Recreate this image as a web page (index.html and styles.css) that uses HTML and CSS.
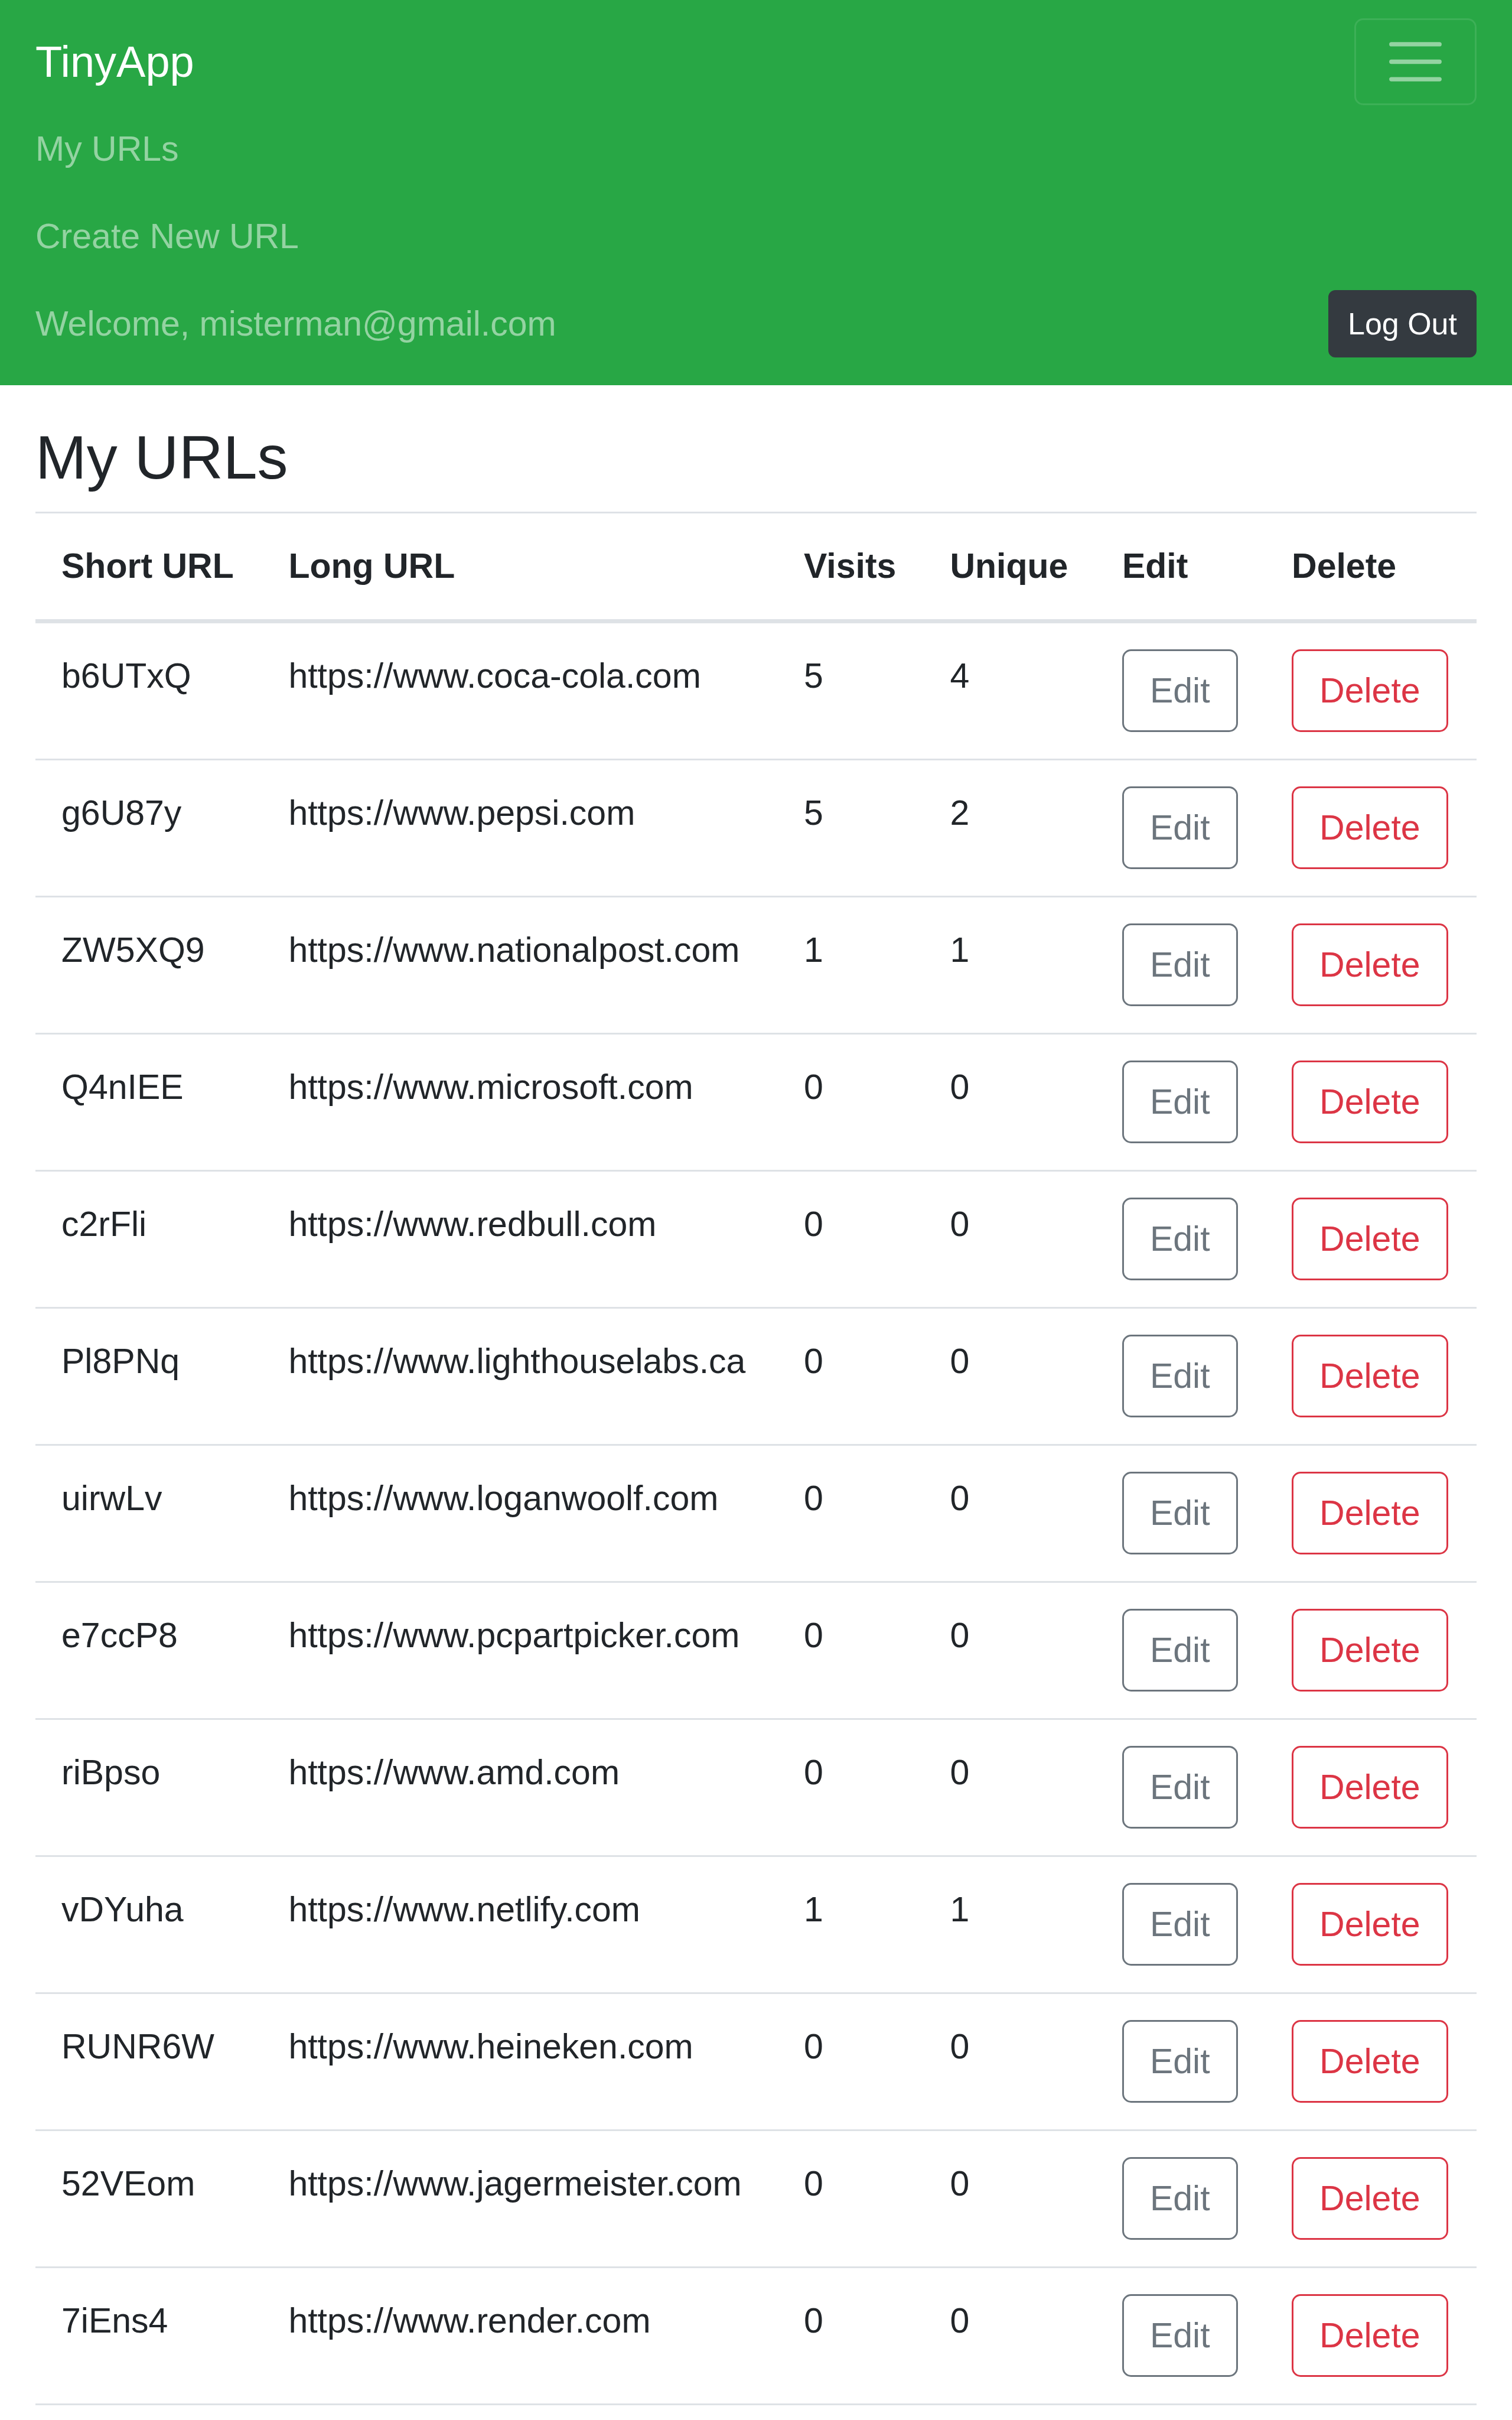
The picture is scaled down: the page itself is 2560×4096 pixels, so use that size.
FILE: index.html
```html
<!DOCTYPE html>
<html lang="en">
<head>
  <meta charset="utf-8">
  <meta name="viewport" content="width=device-width, initial-scale=1">
  <title>TinyApp</title>
  <link rel="stylesheet" href="styles.css">
</head>
<body>
  <header class="navbar">
    <div class="navbar-top">
      <a class="navbar-brand" href="#">TinyApp</a>
      <button class="navbar-toggler" type="button" aria-label="Toggle navigation">
        <svg class="navbar-toggler-icon" viewBox="0 0 30 30" aria-hidden="true">
          <path d="M4 7h22M4 15h22M4 23h22" fill="none" stroke="rgba(255,255,255,.5)" stroke-width="2" stroke-linecap="round" stroke-miterlimit="10"/>
        </svg>
      </button>
    </div>
    <nav class="navbar-nav">
      <a class="nav-link" href="#">My URLs</a>
      <a class="nav-link" href="#">Create New URL</a>
    </nav>
    <form class="navbar-user">
      <span class="nav-link">Welcome, misterman@gmail.com</span>
      <button class="btn btn-dark" type="button">Log Out</button>
    </form>
  </header>

  <main class="container">
    <h1 class="title">My URLs</h1>
    <table class="table">
      <thead>
        <tr><th scope="col">Short URL</th><th scope="col">Long URL</th><th scope="col">Visits</th><th scope="col">Unique</th><th scope="col">Edit</th><th scope="col">Delete</th></tr>
      </thead>
      <tbody>
        <tr><td>b6UTxQ</td><td>https://www.coca-cola.com</td><td>5</td><td>4</td><td><button class="btn btn-edit" type="button">Edit</button></td><td><button class="btn btn-delete" type="button">Delete</button></td></tr>
        <tr><td>g6U87y</td><td>https://www.pepsi.com</td><td>5</td><td>2</td><td><button class="btn btn-edit" type="button">Edit</button></td><td><button class="btn btn-delete" type="button">Delete</button></td></tr>
        <tr><td>ZW5XQ9</td><td>https://www.nationalpost.com</td><td>1</td><td>1</td><td><button class="btn btn-edit" type="button">Edit</button></td><td><button class="btn btn-delete" type="button">Delete</button></td></tr>
        <tr><td>Q4nIEE</td><td>https://www.microsoft.com</td><td>0</td><td>0</td><td><button class="btn btn-edit" type="button">Edit</button></td><td><button class="btn btn-delete" type="button">Delete</button></td></tr>
        <tr><td>c2rFli</td><td>https://www.redbull.com</td><td>0</td><td>0</td><td><button class="btn btn-edit" type="button">Edit</button></td><td><button class="btn btn-delete" type="button">Delete</button></td></tr>
        <tr><td>Pl8PNq</td><td>https://www.lighthouselabs.ca</td><td>0</td><td>0</td><td><button class="btn btn-edit" type="button">Edit</button></td><td><button class="btn btn-delete" type="button">Delete</button></td></tr>
        <tr><td>uirwLv</td><td>https://www.loganwoolf.com</td><td>0</td><td>0</td><td><button class="btn btn-edit" type="button">Edit</button></td><td><button class="btn btn-delete" type="button">Delete</button></td></tr>
        <tr><td>e7ccP8</td><td>https://www.pcpartpicker.com</td><td>0</td><td>0</td><td><button class="btn btn-edit" type="button">Edit</button></td><td><button class="btn btn-delete" type="button">Delete</button></td></tr>
        <tr><td>riBpso</td><td>https://www.amd.com</td><td>0</td><td>0</td><td><button class="btn btn-edit" type="button">Edit</button></td><td><button class="btn btn-delete" type="button">Delete</button></td></tr>
        <tr><td>vDYuha</td><td>https://www.netlify.com</td><td>1</td><td>1</td><td><button class="btn btn-edit" type="button">Edit</button></td><td><button class="btn btn-delete" type="button">Delete</button></td></tr>
        <tr><td>RUNR6W</td><td>https://www.heineken.com</td><td>0</td><td>0</td><td><button class="btn btn-edit" type="button">Edit</button></td><td><button class="btn btn-delete" type="button">Delete</button></td></tr>
        <tr><td>52VEom</td><td>https://www.jagermeister.com</td><td>0</td><td>0</td><td><button class="btn btn-edit" type="button">Edit</button></td><td><button class="btn btn-delete" type="button">Delete</button></td></tr>
        <tr><td>7iEns4</td><td>https://www.render.com</td><td>0</td><td>0</td><td><button class="btn btn-edit" type="button">Edit</button></td><td><button class="btn btn-delete" type="button">Delete</button></td></tr>
      </tbody>
    </table>
  </main>
</body>
</html>
```
FILE: styles.css
```css
* {
  box-sizing: border-box;
}

body {
  margin: 0;
  background: #fff;
  color: #212529;
  font-family: "Liberation Sans", Arial, sans-serif;
  font-size: 59px;
  line-height: 90px;
}

/* Navigation */
.navbar {
  padding: 30px 60px;
  background: #28a745;
}

.navbar-top,
.navbar-user {
  display: flex;
  align-items: center;
  justify-content: space-between;
}

.navbar-top {
  min-height: 148px;
}

.navbar-brand {
  color: #fff;
  font-size: 74px;
  line-height: 111px;
  text-decoration: none;
}

.navbar-toggler {
  padding: 15px 45px;
  border: 3px solid rgba(255, 255, 255, 0.1);
  border-radius: 15px;
  background: transparent;
}

.navbar-toggler-icon {
  display: block;
  width: 111px;
  height: 111px;
}

.navbar-nav {
  display: flex;
  flex-direction: column;
}

.nav-link {
  padding: 29px 0;
  color: rgba(255, 255, 255, 0.5);
  text-decoration: none;
}

/* Buttons */
.btn {
  display: block;
  padding: 22px 44px;
  border: 3px solid currentColor;
  border-radius: 15px;
  background: transparent;
  font-family: inherit;
  font-size: 59px;
  line-height: 90px;
}

.btn-dark {
  padding: 15px 30px;
  border-color: #343a40;
  border-radius: 12px;
  background: #343a40;
  color: #fff;
  font-size: 52px;
  line-height: 78px;
}

.btn-edit {
  color: #6c757d;
}

.btn-delete {
  color: #dc3545;
}

/* URL list */
.container {
  padding: 60px 60px 0;
}

.title {
  margin: 0 0 30px;
  font-size: 104px;
  font-weight: 400;
  line-height: 124px;
}

.table {
  width: 100%;
  border-collapse: separate;
  border-spacing: 0;
}

.table th,
.table td {
  padding: 44px 44px 45px;
  border-top: 3px solid #dee2e6;
  text-align: left;
  vertical-align: top;
}

.table th {
  border-bottom: 7px solid #dee2e6;
}

.table tbody tr:first-child td {
  border-top: 0;
}

.table tbody tr:last-child td {
  border-bottom: 3px solid #dee2e6;
}
```
